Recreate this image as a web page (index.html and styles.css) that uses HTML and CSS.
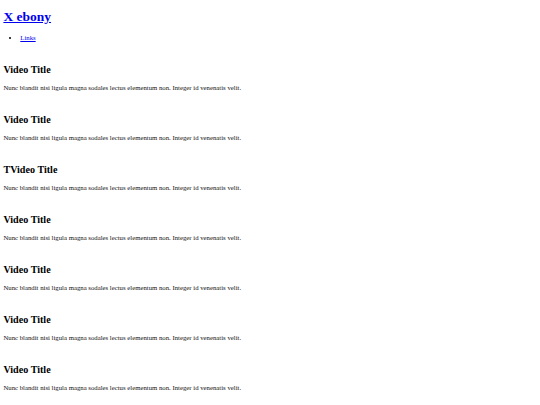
FILE: index.html
```html
<!DOCTYPE html>
<html>
<head>
<meta charset="utf-8">
<title>X ebony</title>
<link rel="stylesheet" href="styles.css">
</head>
<body>
<header class="site-header">
  <h1 class="site-title"><a href="#">X ebony</a></h1>
  <ul class="nav">
    <li><a href="#">Links</a></li>
  </ul>
</header>
<main class="videos">
  <article class="video">
    <h2 class="video-title">Video Title</h2>
    <p class="video-desc">Nunc blandit nisi ligula magna sodales lectus elementum non. Integer id venenatis velit.</p>
  </article>
  <article class="video">
    <h2 class="video-title">Video Title</h2>
    <p class="video-desc">Nunc blandit nisi ligula magna sodales lectus elementum non. Integer id venenatis velit.</p>
  </article>
  <article class="video">
    <h2 class="video-title">TVideo Title</h2>
    <p class="video-desc">Nunc blandit nisi ligula magna sodales lectus elementum non. Integer id venenatis velit.</p>
  </article>
  <article class="video">
    <h2 class="video-title">Video Title</h2>
    <p class="video-desc">Nunc blandit nisi ligula magna sodales lectus elementum non. Integer id venenatis velit.</p>
  </article>
  <article class="video">
    <h2 class="video-title">Video Title</h2>
    <p class="video-desc">Nunc blandit nisi ligula magna sodales lectus elementum non. Integer id venenatis velit.</p>
  </article>
  <article class="video">
    <h2 class="video-title">Video Title</h2>
    <p class="video-desc">Nunc blandit nisi ligula magna sodales lectus elementum non. Integer id venenatis velit.</p>
  </article>
  <article class="video">
    <h2 class="video-title">Video Title</h2>
    <p class="video-desc">Nunc blandit nisi ligula magna sodales lectus elementum non. Integer id venenatis velit.</p>
  </article>
</main>
</body>
</html>
```

FILE: styles.css
```css
html {
  background: #fff;
}
body {
  margin: 3.4px;
  font-family: "Liberation Serif", "Times New Roman", serif;
  color: #000;
}
a {
  color: #0000ee;
}
.site-title {
  font-size: 13.5px;
  font-weight: bold;
  margin: 6px 0 9px;
}
.nav {
  margin: 6.75px 0;
  padding-left: 16.9px;
  font-size: 6.75px;
  list-style: disc;
}
.video-title {
  font-size: 10.125px;
  font-weight: bold;
  margin: 22.4px 0 9.4px;
}
.video + .video .video-title {
  margin-top: 22.6px;
}
.video-desc {
  font-size: 6.75px;
  margin: 6.75px 0;
  color: #111;
}
```
